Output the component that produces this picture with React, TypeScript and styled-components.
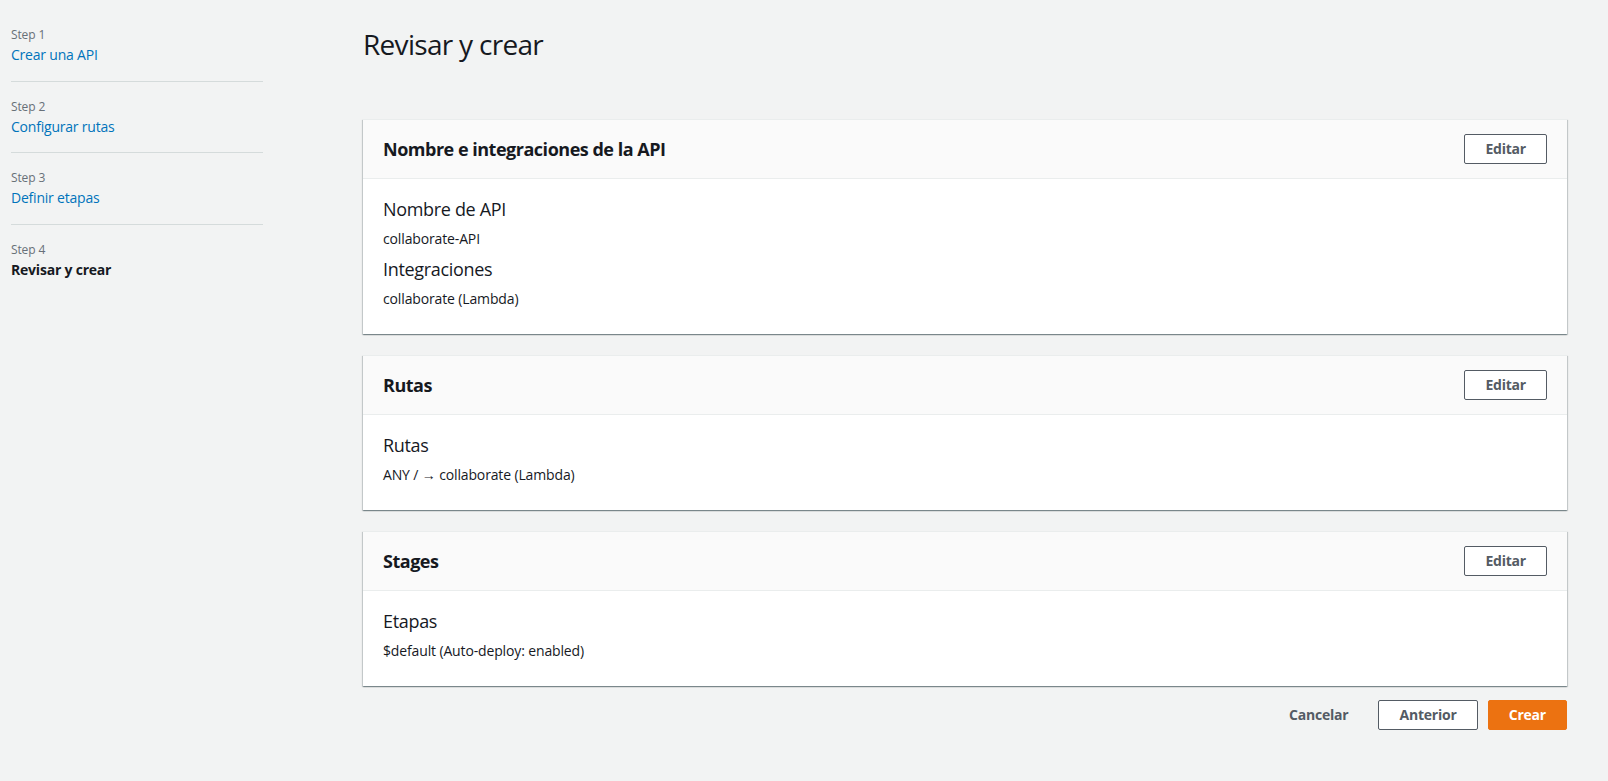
import styled, { createGlobalStyle } from "styled-components";

const GlobalStyle = createGlobalStyle`
    html, body {
        margin: 0;
        padding: 0;
        background-color: #f2f3f3;
        font-family: "Open Sans", "Noto Sans", sans-serif;
        color: #16191f;
    }
`

interface Step {
    label: string;
    title: string;
}

interface Field {
    label: string;
    value: string;
}

interface Section {
    title: string;
    fields: Field[];
}

const steps: Step[] = [
    { label: "Step 1", title: "Crear una API" },
    { label: "Step 2", title: "Configurar rutas" },
    { label: "Step 3", title: "Definir etapas" },
    { label: "Step 4", title: "Revisar y crear" },
];

const sections: Section[] = [
    {
        title: "Nombre e integraciones de la API",
        fields: [
            { label: "Nombre de API", value: "collaborate-API" },
            { label: "Integraciones", value: "collaborate (Lambda)" },
        ],
    },
    {
        title: "Rutas",
        fields: [{ label: "Rutas", value: "ANY / → collaborate (Lambda)" }],
    },
    {
        title: "Stages",
        fields: [{ label: "Etapas", value: "$default (Auto-deploy: enabled)" }],
    },
];

const App: React.FC = () => {
    const current = steps.length - 1;
    return <Page>
                <GlobalStyle />
                <Nav>
                    {steps.map((step, i) => (
                        <StepItem key={step.label} $last={i === current}>
                            <StepLabel>{step.label}</StepLabel>
                            <StepTitle $active={i === current}>{step.title}</StepTitle>
                        </StepItem>
                    ))}
                </Nav>
                <Main>
                    <Title>Revisar y crear</Title>
                    <Cards>
                        {sections.map((section) => (
                            <Card key={section.title}>
                                <CardHeader>
                                    <CardTitle>{section.title}</CardTitle>
                                    <Button>Editar</Button>
                                </CardHeader>
                                <CardBody>
                                    {section.fields.map((field) => (
                                        <FieldBlock key={field.label}>
                                            <FieldLabel>{field.label}</FieldLabel>
                                            <FieldValue>{field.value}</FieldValue>
                                        </FieldBlock>
                                    ))}
                                </CardBody>
                            </Card>
                        ))}
                    </Cards>
                    <Actions>
                        <LinkButton>Cancelar</LinkButton>
                        <Button>Anterior</Button>
                        <Button $primary>Crear</Button>
                    </Actions>
                </Main>
            </Page>
};

const Page = styled.div`
    display: flex;
    min-height: 781px;
    background-color: #f2f3f3;
`

const Nav = styled.nav`
    width: 252px;
    flex-shrink: 0;
    padding: 10px 0 0 11px;
`

const StepItem = styled.div<{ $last?: boolean }>`
    padding: 16px 0 14.5px;
    border-bottom: 1px solid ${(p) => (p.$last ? "transparent" : "#d5dbdb")};
`

const StepLabel = styled.div`
    font-size: 12px;
    line-height: 18px;
    color: #687078;
    letter-spacing: -0.01em;
`

const StepTitle = styled.div<{ $active?: boolean }>`
    font-size: 14px;
    line-height: 22px;
    letter-spacing: -0.015em;
    color: ${(p) => (p.$active ? "#16191f" : "#0073bb")};
    font-weight: ${(p) => (p.$active ? 700 : 400)};
    cursor: ${(p) => (p.$active ? "default" : "pointer")};
`

const Main = styled.main`
    flex: 1;
    padding: 26px 41px 40px 100px;
`

const Title = styled.h1`
    margin: 0 0 57px;
    font-size: 28px;
    line-height: 36px;
    font-weight: 400;
    letter-spacing: -0.025em;
    color: #16191f;
`

const Cards = styled.div`
    display: flex;
    flex-direction: column;
    gap: 21px;
`

const Card = styled.section`
    background-color: #ffffff;
    border-top: 1px solid #eaeded;
    box-shadow: 0 1px 1px 0 rgba(0, 28, 36, 0.3), 1px 1px 1px 0 rgba(0, 28, 36, 0.15), -1px 1px 1px 0 rgba(0, 28, 36, 0.15);
`

const CardHeader = styled.div`
    display: flex;
    align-items: center;
    justify-content: space-between;
    padding: 14px 20px 14px;
    background-color: #fafafa;
    border-bottom: 1px solid #eaeded;
`

const CardTitle = styled.h2`
    margin: 0;
    font-size: 18px;
    line-height: 24px;
    font-weight: 700;
    letter-spacing: -0.027em;
    color: #16191f;
`

const CardBody = styled.div`
    display: flex;
    flex-direction: column;
    gap: 8px;
    padding: 18px 20px 25px;
`

const FieldBlock = styled.div`
    display: flex;
    flex-direction: column;
    gap: 8px;
`

const FieldLabel = styled.div`
    font-size: 18px;
    line-height: 24px;
    letter-spacing: -0.018em;
    color: #16191f;
`

const FieldValue = styled.div`
    font-size: 14px;
    line-height: 20px;
    letter-spacing: -0.01em;
    color: #16191f;
`

const Button = styled.button<{ $primary?: boolean }>`
    font-family: inherit;
    font-size: 14px;
    line-height: 20px;
    font-weight: 700;
    letter-spacing: -0.015em;
    padding: 4px 20px;
    border-radius: 2px;
    border: 1px solid ${(p) => (p.$primary ? "#ec7211" : "#545b64")};
    background-color: ${(p) => (p.$primary ? "#ec7211" : "#ffffff")};
    color: ${(p) => (p.$primary ? "#ffffff" : "#545b64")};
    cursor: pointer;
`

const LinkButton = styled.button`
    font-family: inherit;
    font-size: 14px;
    line-height: 20px;
    font-weight: 700;
    letter-spacing: -0.015em;
    padding: 5px 20px;
    border: none;
    background: transparent;
    color: #545b64;
    cursor: pointer;
`

const Actions = styled.div`
    display: flex;
    justify-content: flex-end;
    align-items: center;
    gap: 10px;
    margin-top: 14px;
`

export default App;
